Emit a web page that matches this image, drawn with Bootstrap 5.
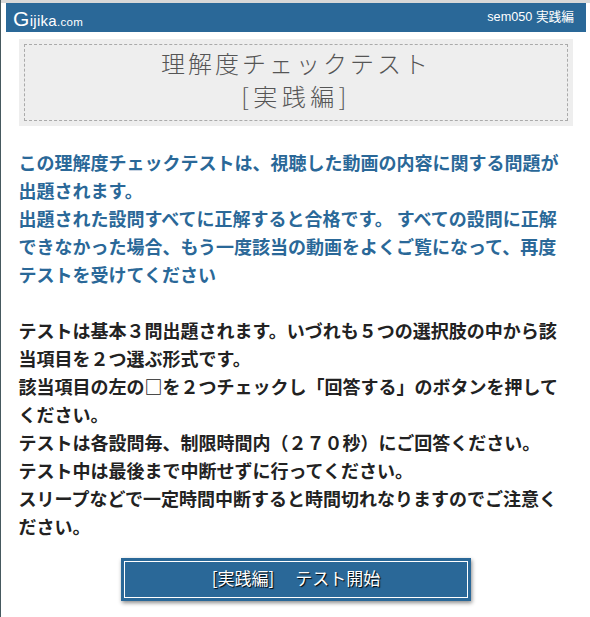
<!DOCTYPE html>
<html lang="ja">
<head>
<meta charset="utf-8">
<title>理解度チェックテスト</title>
<link href="https://cdn.jsdelivr.net/npm/bootstrap@5.3.0/dist/css/bootstrap.min.css" rel="stylesheet">
<style>
html,body{height:100%;}
body{font-family:"Noto Sans CJK JP","Liberation Sans",sans-serif;background:#fff;margin:0;overflow:hidden;border-left:1px solid #46595f;}
.shell{padding:3px 4px 0 5px;}
.topline{height:3px;background:#d8d8d8;margin:-3px -4px 0 -5px;}
.hdr{height:29px;background:#2a6898;color:#fff;padding:0 12px 0 7px;}
.logo{font-family:"Liberation Sans",sans-serif;font-size:15px;line-height:1;letter-spacing:.3px;padding-top:1px;}
.logo b{font-weight:400;font-size:21px;}
.logo i{font-style:normal;font-size:11.5px;}
.sem{font-family:"Liberation Sans","Noto Sans CJK JP",sans-serif;font-size:12.7px;}
.titlewrap{margin:7px 13px 0;background:#eee;padding:5px;}
.titlein{border:1px dashed #aaa;height:77px;text-align:center;color:#555;font-size:24px;font-weight:300;line-height:33px;letter-spacing:3px;padding-top:1px;}
.titlesub{letter-spacing:4.5px;}
.body-text{margin:22px 16px 0 12.5px;font-size:18px;line-height:28px;font-weight:700;color:#222;}
.lead-blue{color:#2a6898;margin-bottom:28px;}
.startbtn{display:block;width:350px;height:43px;margin:18px 0 0 115px;padding:3px;background:#2a6898;box-shadow:1px 2px 4px rgba(0,0,0,.45);border:0;border-radius:0;}
.startbtn span{display:flex;align-items:center;justify-content:center;height:100%;border:1px solid #fff;color:#fff;font-size:17px;padding-bottom:4px;text-shadow:1px 1px 1px #000;white-space:pre;}
</style>
</head>
<body>
<div class="shell">
  <div class="topline"></div>
  <header class="hdr d-flex justify-content-between align-items-center">
    <div class="logo"><b>G</b>ijika<i>.com</i></div>
    <div class="sem">sem050 実践編</div>
  </header>
  <div class="titlewrap"><div class="titlein">理解度チェックテスト<br><span class="titlesub">[実践編]</span></div></div>
  <div class="body-text">
    <p class="lead-blue">この理解度チェックテストは、視聴した動画の内容に関する問題が出題されます。<br>出題された設問すべてに正解すると合格です。 すべての設問に正解できなかった場合、もう一度該当の動画をよくご覧になって、再度テストを受けてください</p>
    <p class="m-0">テストは基本３問出題されます。いづれも５つの選択肢の中から該当項目を２つ選ぶ形式です。<br>該当項目の左の□を２つチェックし「回答する」のボタンを押してください。<br>テストは各設問毎、制限時間内（２７０秒）にご回答ください。<br>テスト中は最後まで中断せずに行ってください。<br>スリープなどで一定時間中断すると時間切れなりますのでご注意ください。</p>
  </div>
  <button type="button" class="btn startbtn"><span>[実践編]　 テスト開始</span></button>
</div>
<script src="https://cdn.jsdelivr.net/npm/bootstrap@5.3.0/dist/js/bootstrap.bundle.min.js"></script>
</body>
</html>
